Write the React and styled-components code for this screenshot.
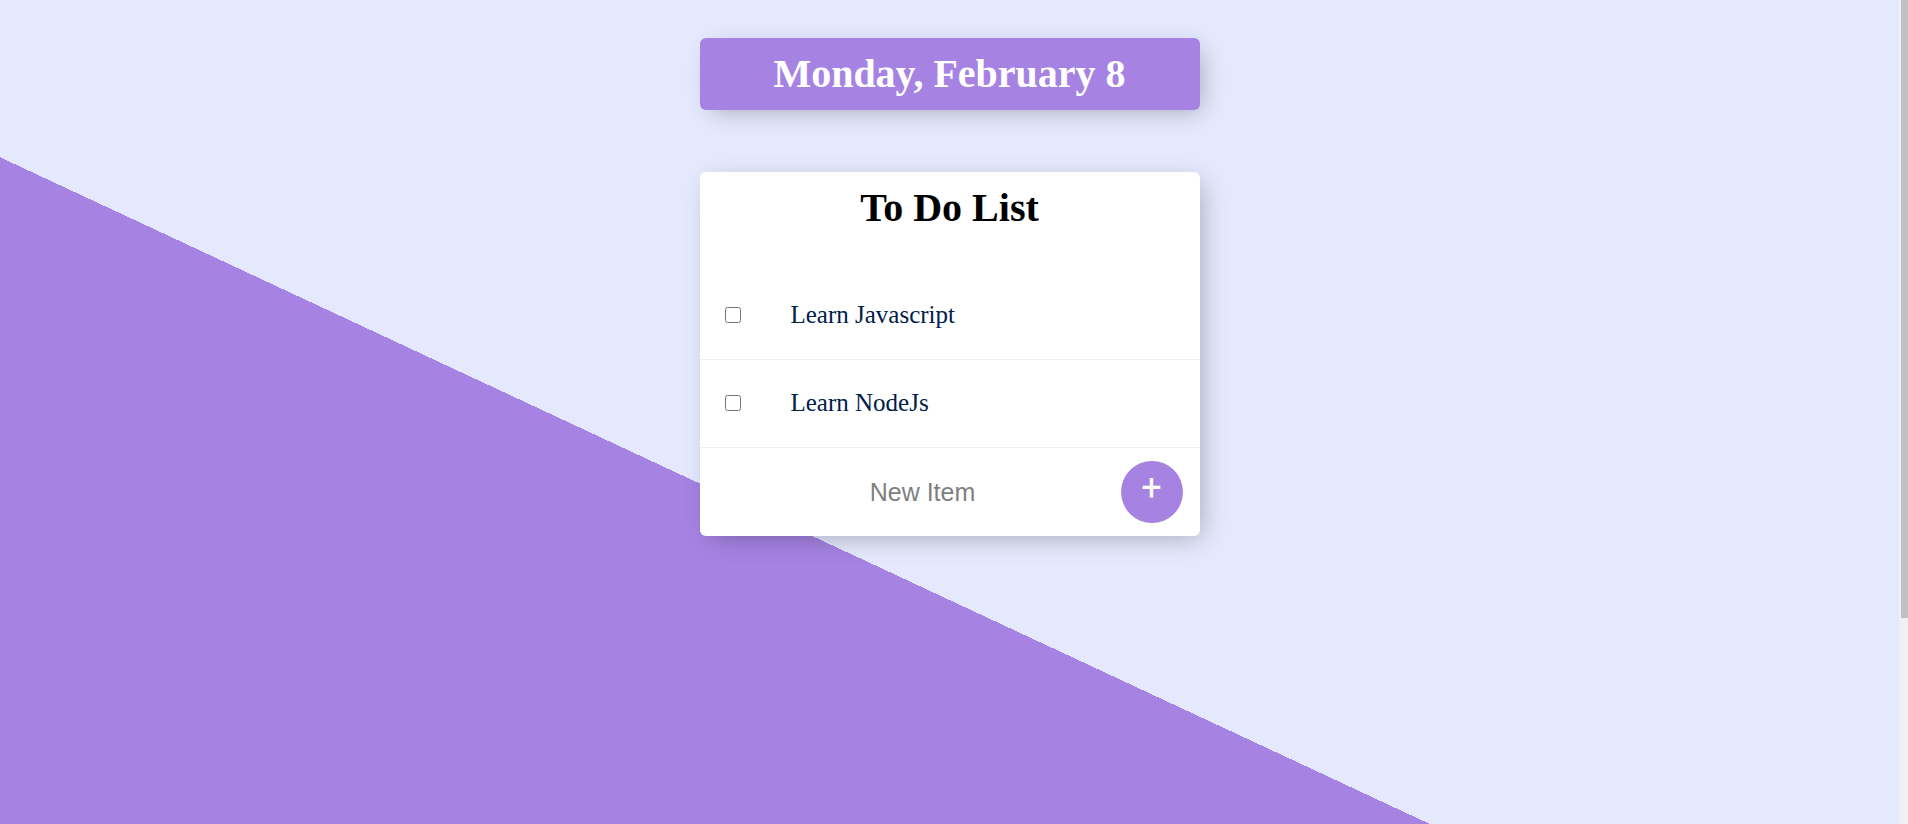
import React, { useState } from "react";
import styled, { createGlobalStyle } from "styled-components";

const purple = "#a683e3";
const lavender = "#e4e9fd";
const serif = '"Liberation Serif", "Times New Roman", serif';
const sans = '"Liberation Sans", Arial, sans-serif';

const GlobalStyle = createGlobalStyle`
  * { box-sizing: border-box; }
  body { margin: 0; font-family: ${serif}; }
`;

const Shell = styled.div`
  display: flex;
  height: 100vh;
  overflow: hidden;
`;

const Page = styled.main`
  flex: 1;
  min-width: 0;
  overflow-y: auto;
  scrollbar-width: none;
`;

const Backdrop = styled.div`
  min-height: 1200px;
  padding: 38px 16px;
  background: linear-gradient(25deg, ${purple} 50%, ${lavender} 50%);
`;

const Column = styled.div`
  display: flex;
  flex-direction: column;
  gap: 62px;
  max-width: 500px;
  margin: 0 auto;
`;

const Box = styled.section`
  background: ${(p) => (p.$accent ? purple : "#fff")};
  color: ${(p) => (p.$accent ? "#fff" : "#000")};
  border-radius: 6px;
  box-shadow: 6px 6px 25px -6px rgba(0, 0, 0, 0.3);
`;

const Title = styled.h1`
  margin: 0;
  padding: 13px;
  font-size: 40px;
  line-height: 46px;
  font-weight: 700;
  text-align: center;
`;

const Items = styled.ul`
  list-style: none;
  margin: 28px 0 0;
  padding: 0;
`;

const Item = styled.li`
  border-bottom: 1px solid #f1f1f1;
`;

const ItemLabel = styled.label`
  display: flex;
  align-items: center;
  gap: 50px;
  min-height: 87px;
  padding: 0 25px 2px;
  color: #00204a;
  font-size: 25px;
  line-height: 28px;
  text-decoration: ${(p) => (p.$done ? "line-through" : "none")};
`;

const Check = styled.input`
  width: 16px;
  height: 16px;
  margin: 0;
`;

const AddForm = styled.form`
  display: flex;
  align-items: center;
  min-height: 88px;
  padding: 0 17px 0 25px;
`;

const NewItem = styled.input`
  flex: 1;
  min-width: 0;
  height: 75px;
  border: 0;
  outline: 0;
  padding: 0;
  background: transparent;
  text-align: center;
  font-family: ${sans};
  font-size: 25px;
  &::placeholder { color: #7f7f7f; opacity: 1; }
`;

const AddButton = styled.button`
  flex: none;
  width: 62px;
  height: 62px;
  padding: 0 0 8px;
  border: 0;
  border-radius: 50%;
  background: ${purple};
  color: #fff;
  font-family: Roboto, sans-serif;
  font-size: 36px;
  line-height: 42px;
  cursor: pointer;
`;

const ScrollRail = styled.div`
  flex: none;
  width: 9px;
  padding-left: 2px;
  background: #f0f0f0;
`;

const ScrollThumb = styled.div`
  height: 75%;
  background: #c1c1c1;
`;

export default function App() {
  const [items, setItems] = useState([
    { name: "Learn Javascript", done: false },
    { name: "Learn NodeJs", done: false },
  ]);
  const [draft, setDraft] = useState("");

  const toggle = (index) =>
    setItems(items.map((it, i) => (i === index ? { ...it, done: !it.done } : it)));

  const add = (event) => {
    event.preventDefault();
    if (!draft.trim()) return;
    setItems([...items, { name: draft.trim(), done: false }]);
    setDraft("");
  };

  return (
    <Shell>
      <GlobalStyle />
      <Page>
        <Backdrop>
          <Column>
            <Box $accent>
              <Title>Monday, February 8</Title>
            </Box>
            <Box>
              <Title as="h2">To Do List</Title>
              <Items>
                {items.map((item, i) => (
                  <Item key={i}>
                    <ItemLabel $done={item.done}>
                      <Check type="checkbox" checked={item.done} onChange={() => toggle(i)} />
                      {item.name}
                    </ItemLabel>
                  </Item>
                ))}
              </Items>
              <AddForm onSubmit={add}>
                <NewItem
                  type="text"
                  aria-label="New Item"
                  placeholder="New Item"
                  autoComplete="off"
                  value={draft}
                  onChange={(e) => setDraft(e.target.value)}
                />
                <AddButton type="submit">+</AddButton>
              </AddForm>
            </Box>
          </Column>
        </Backdrop>
      </Page>
      <ScrollRail aria-hidden="true">
        <ScrollThumb />
      </ScrollRail>
    </Shell>
  );
}
